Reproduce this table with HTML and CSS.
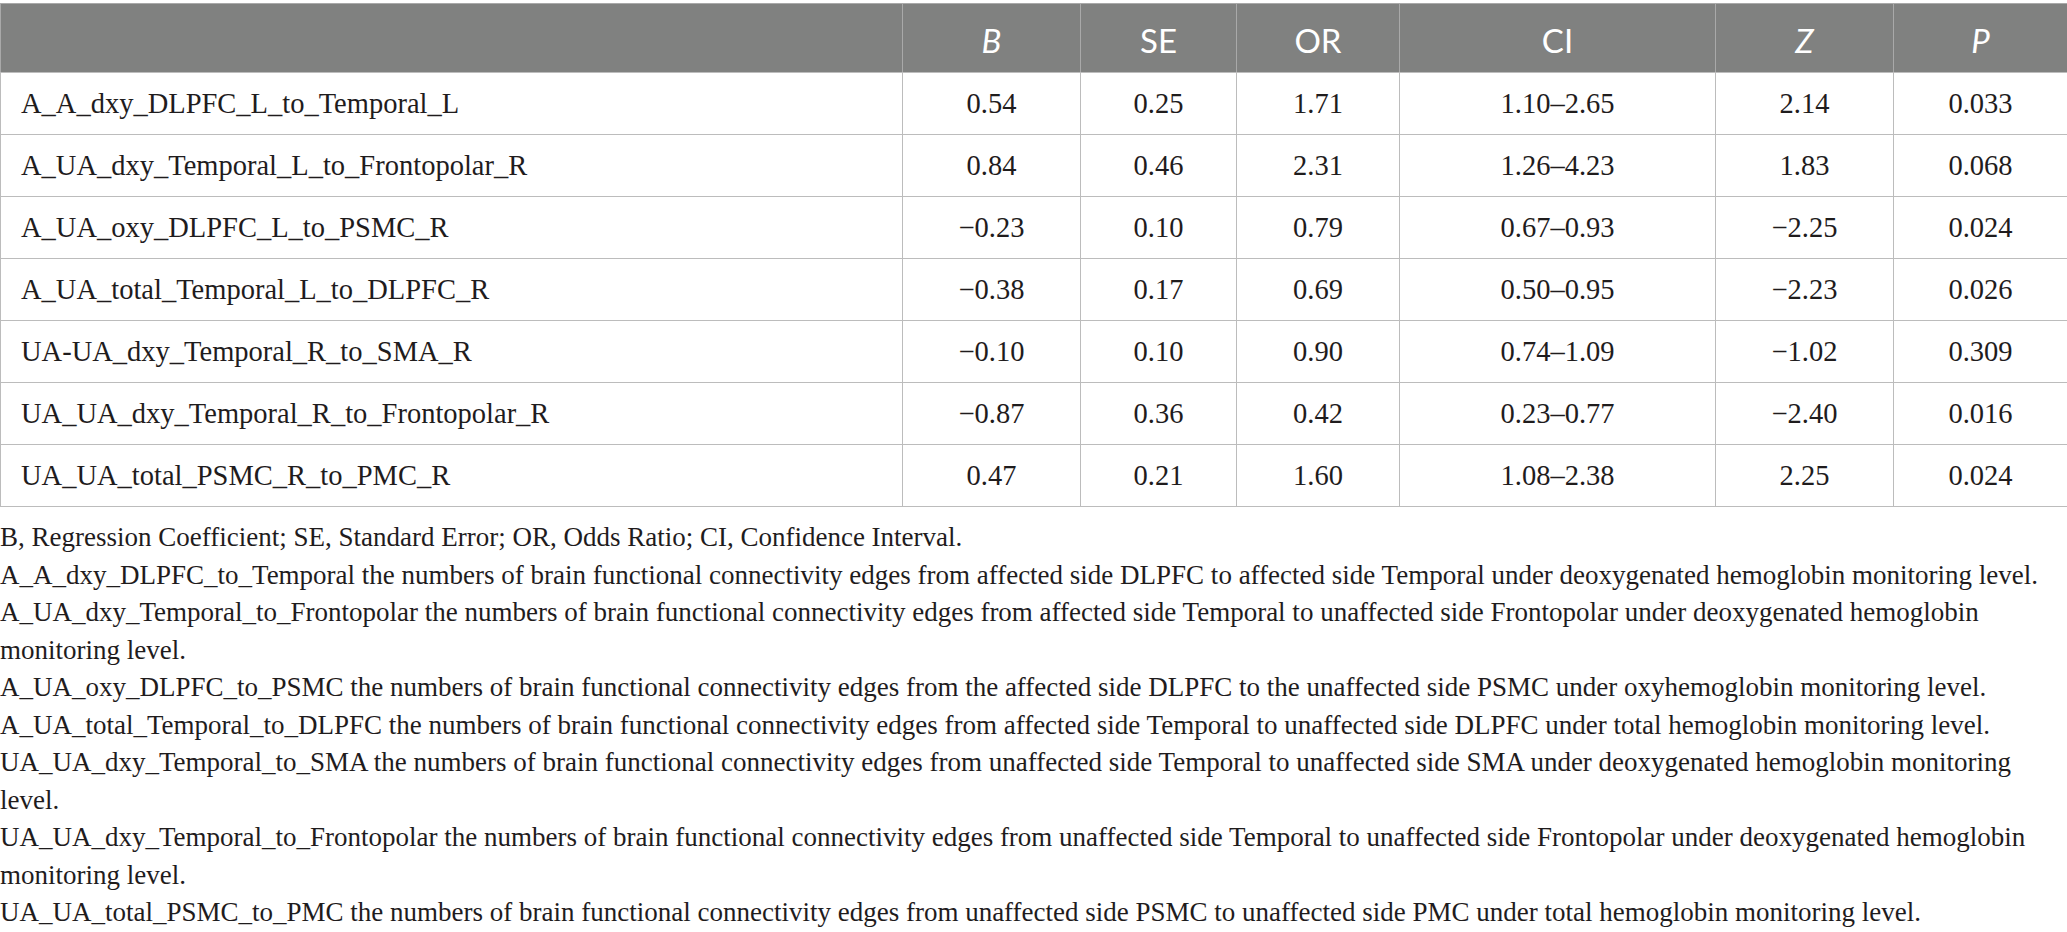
FILE: index.html
```html
<!DOCTYPE html>
<html lang="en">
<head>
<meta charset="utf-8">
<title>Table</title>
<link rel="stylesheet" href="styles.css">
</head>
<body>
<div class="page">
  <table class="data">
    <colgroup>
      <col class="c-name"><col class="c-b"><col class="c-se"><col class="c-or"><col class="c-ci"><col class="c-z"><col class="c-p">
    </colgroup>
    <thead>
      <tr>
        <th></th>
        <th><i>B</i></th>
        <th>SE</th>
        <th>OR</th>
        <th>CI</th>
        <th><i>Z</i></th>
        <th><i>P</i></th>
      </tr>
    </thead>
    <tbody>
      <tr><td class="name">A_A_dxy_DLPFC_L_to_Temporal_L</td><td>0.54</td><td>0.25</td><td>1.71</td><td>1.10–2.65</td><td>2.14</td><td>0.033</td></tr>
      <tr><td class="name">A_UA_dxy_Temporal_L_to_Frontopolar_R</td><td>0.84</td><td>0.46</td><td>2.31</td><td>1.26–4.23</td><td>1.83</td><td>0.068</td></tr>
      <tr><td class="name">A_UA_oxy_DLPFC_L_to_PSMC_R</td><td>−0.23</td><td>0.10</td><td>0.79</td><td>0.67–0.93</td><td>−2.25</td><td>0.024</td></tr>
      <tr><td class="name">A_UA_total_Temporal_L_to_DLPFC_R</td><td>−0.38</td><td>0.17</td><td>0.69</td><td>0.50–0.95</td><td>−2.23</td><td>0.026</td></tr>
      <tr><td class="name">UA-UA_dxy_Temporal_R_to_SMA_R</td><td>−0.10</td><td>0.10</td><td>0.90</td><td>0.74–1.09</td><td>−1.02</td><td>0.309</td></tr>
      <tr><td class="name">UA_UA_dxy_Temporal_R_to_Frontopolar_R</td><td>−0.87</td><td>0.36</td><td>0.42</td><td>0.23–0.77</td><td>−2.40</td><td>0.016</td></tr>
      <tr><td class="name">UA_UA_total_PSMC_R_to_PMC_R</td><td>0.47</td><td>0.21</td><td>1.60</td><td>1.08–2.38</td><td>2.25</td><td>0.024</td></tr>
    </tbody>
  </table>
  <div class="notes">
    <p>B, Regression Coefficient; SE, Standard Error; OR, Odds Ratio; CI, Confidence Interval.</p>
    <p>A_A_dxy_DLPFC_to_Temporal the numbers of brain functional connectivity edges from affected side DLPFC to affected side Temporal under deoxygenated hemoglobin monitoring level.</p>
    <p>A_UA_dxy_Temporal_to_Frontopolar the numbers of brain functional connectivity edges from affected side Temporal to unaffected side Frontopolar under deoxygenated hemoglobin monitoring level.</p>
    <p>A_UA_oxy_DLPFC_to_PSMC the numbers of brain functional connectivity edges from the affected side DLPFC to the unaffected side PSMC under oxyhemoglobin monitoring level.</p>
    <p>A_UA_total_Temporal_to_DLPFC the numbers of brain functional connectivity edges from affected side Temporal to unaffected side DLPFC under total hemoglobin monitoring level.</p>
    <p>UA_UA_dxy_Temporal_to_SMA the numbers of brain functional connectivity edges from unaffected side Temporal to unaffected side SMA under deoxygenated hemoglobin monitoring level.</p>
    <p>UA_UA_dxy_Temporal_to_Frontopolar the numbers of brain functional connectivity edges from unaffected side Temporal to unaffected side Frontopolar under deoxygenated hemoglobin monitoring level.</p>
    <p>UA_UA_total_PSMC_to_PMC the numbers of brain functional connectivity edges from unaffected side PSMC to unaffected side PMC under total hemoglobin monitoring level.</p>
  </div>
</div>
</body>
</html>
```

FILE: styles.css
```css
html, body {
  margin: 0;
  padding: 0;
  background: #ffffff;
}

.page {
  padding-top: 3px;
  font-family: "Liberation Serif", "Times New Roman", serif;
  color: #1f1c1d;
}

.data {
  width: 2067px;
  border-collapse: collapse;
  table-layout: fixed;
  font-size: 28.5px;
}

.c-name { width: 902px; }
.c-b { width: 178px; }
.c-se { width: 156px; }
.c-or { width: 163px; }
.c-ci { width: 316px; }
.c-z { width: 178px; }
.c-p { width: 174px; }

.data th {
  background: #808180;
  color: #ffffff;
  font-family: "Lato", "Open Sans", "Liberation Sans", sans-serif;
  font-weight: 400;
  font-size: 33px;
  height: 64px;
  padding: 4px 0 0;
  text-align: center;
  border: 1px solid #a9a9a9;
  border-bottom-color: #bdbdbd;
}

.data td {
  height: 61px;
  padding: 0;
  text-align: center;
  border: 1px solid #bcbcbc;
  vertical-align: middle;
}

.data td.name {
  text-align: left;
  padding-left: 20px;
}

.notes {
  margin-top: 12px;
  font-size: 27px;
  line-height: 37.5px;
}

.notes p {
  margin: 0;
}
```
